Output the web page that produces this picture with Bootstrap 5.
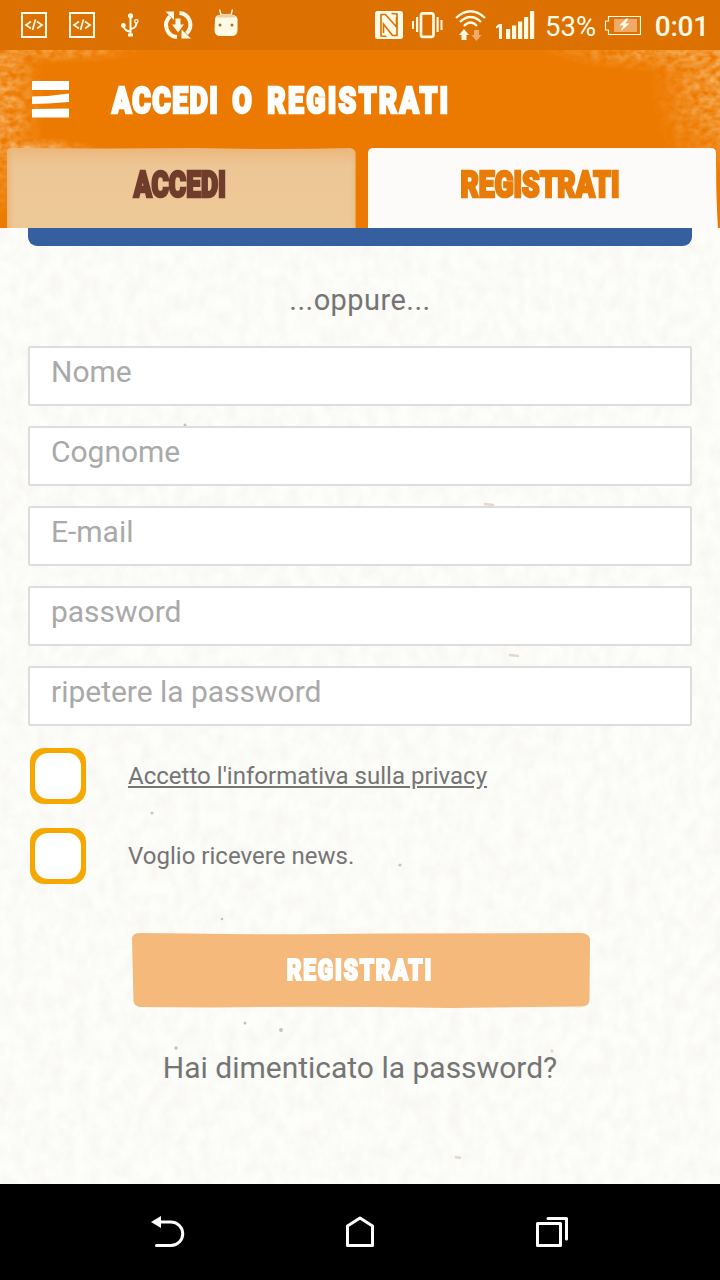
<!DOCTYPE html>
<html lang="it">
<head>
<meta charset="utf-8">
<meta name="viewport" content="width=device-width, initial-scale=1">
<title>Accedi o registrati</title>
<link href="https://cdn.jsdelivr.net/npm/bootstrap@5.3.0/dist/css/bootstrap.min.css" rel="stylesheet">
<style>
body{font-family:Roboto,"Liberation Sans",sans-serif;background:#fdfdf9;color:#757575}
.screen{width:720px;height:1280px}
.status-row{height:50px;background:#dc7000;color:#fffbe6;font-size:27.5px;line-height:50px}
.status-row svg{display:block;flex:none}
.percent{margin-left:5px;padding-top:2px}
.battery{margin-left:8px}
.clock{margin-right:11px;font-size:28px;font-weight:500;letter-spacing:-.2px;padding-top:2px}
.app-head{height:178px;background:#ed7a00}
.texture{position:absolute;inset:0;width:100%;height:100%;pointer-events:none}
.title-row{height:98px;padding-left:31px}
.display-type{display:inline-block;font-weight:900;white-space:nowrap;line-height:1;-webkit-text-stroke:2.6px currentColor;text-transform:uppercase}
.title-type{font-size:37px;letter-spacing:3px;word-spacing:5px;color:#fff;transform:scaleX(.765);transform-origin:left center;margin-left:43px;padding-top:2px}
.title-type span{letter-spacing:1.800px}
.tab-row{height:80px;padding-left:7px;gap:11px}
.tab-pill{height:80px;width:350px;padding:0 0 6px;border:0;background:none}
.tab-type{font-size:36px;transform:scaleX(.735);left:-2px}
.tab-type.wide{transform:scaleX(.78);left:-3px}
.tab-pill .shape{position:absolute;left:0;top:0}
.form-area{height:956px;padding:0 28px}
.facebook-end{height:18px;background:#355f9f;border-radius:0 0 9px 9px}
.or-line{font-size:29px;line-height:36px;margin:36px 0 28px;letter-spacing:.45px}
.form-stack{gap:20px}
.field{height:60px;border:2px solid #dedddd;border-radius:2px;font-size:30px;line-height:36px;padding:5px 21px 15px;background:#fff;box-shadow:none;letter-spacing:-.02px}
.field::placeholder{color:#a9a9a9;opacity:1}
.tick-row{height:60px;padding-left:2px}
.tick{width:56px;height:56px;border:5px solid #f6a800;border-radius:14px;background:#f6a800;flex:none;padding:0}
.tick i{display:block;width:46px;height:46px;border-radius:13px;background:#fff}
.tick-text{font-size:24px;line-height:30px;margin-left:42px;color:#757575;letter-spacing:.02px}
.send{width:458px;height:76px;border:0;background:none;padding:2px 0 0;margin:46px 0 0 2px}
.send svg{position:absolute;left:0;top:0}
.send .display-type{font-size:30px;letter-spacing:2.4px;color:#fff;transform:scaleX(.755);-webkit-text-stroke-width:2.2px;left:-1px}
.forgot{font-size:30px;line-height:36px;margin-top:42px;color:#757575;letter-spacing:0}
.keys-row{height:96px}
</style>
</head>
<body>
<div class="screen d-flex flex-column overflow-hidden position-relative">
  <div class="status-row d-flex position-relative">
    <svg width="540" height="50" viewBox="0 0 540 50" fill="#fffbe6">
      <g fill="none" stroke="#fffbe6" stroke-width="2">
        <path d="M22 13h24v24H22zM70 13h24v24H70z"/>
        <path stroke-width="1.7" d="M31 21.500l-5 3.500l5 3.500M37 21.500l5 3.500l-5 3.500M35.500 19.500l-3 10.500M79 21.500l-5 3.500l5 3.500M85 21.500l5 3.500l-5 3.500M83.500 19.500l-3 10.500"/>
        <path d="M130.500 15v20M124 27q1 4 6 4.500M131 29q5-1 5.500-6"/>
        <circle cx="136.300" cy="21.300" r="1.700" stroke-width="1.300"/>
      </g>
      <circle cx="130.500" cy="15.800" r="2.600"/><circle cx="123.300" cy="25.500" r="2.400"/><path d="M128 33.500h5v3h-5z"/>
      <g fill="none" stroke="#fffbe6" stroke-width="4"><path d="M177 37a11.800 11.800 0 0 1-7-20.500M179.500 13a11.800 11.800 0 0 1 7 20.500"/></g>
      <path d="M165.500 11.500h8.500v8.500zM191 38.500h-9.500v-9zM175.500 18.500h5v6h3.500l-6 8-6-8h3.500z"/>
      <path d="M215 19q0-5 11-5t11.500 5v11q0 6-6 6h-11q-6 0-6-6z"/>
      <path d="M216.500 16q9.500-4 19 0v1.500h-19z" fill="#f3cda2"/>
      <path d="M219.500 9.500l1.500 5M232.500 9.500l-1.500 5" stroke="#fffbe6" stroke-width="1.500"/>
      <circle cx="220" cy="25" r="1.500" fill="#b86a14"/><circle cx="232" cy="25" r="1.500" fill="#b86a14"/>
      <rect x="375" y="11" width="28" height="28" rx="2.500"/>
      <g fill="none" stroke="#dc7000" stroke-width="1.600"><path d="M386.500 36.500L381 36V14.500h4.500L396.500 27V17"/><path d="M391.500 13.500L397 14v21.500h-4.500L383.500 24v9"/></g>
      <rect x="421" y="13.300" width="12.500" height="23.500" rx="2" fill="none" stroke="#fffbe6" stroke-width="2.700"/>
      <path d="M412 21h2v8h-2zM416 17h2.200v15H416zM436.500 17h2.200v15h-2.200zM440.500 20h2v10h-2z"/>
      <g fill="none" stroke="#fffbe6" stroke-width="2.300"><path d="M456 18q14.500-13.500 29 0M460 22q10.500-10 21 0M464 26q6.500-7 13 0"/></g>
      <path d="M464 29l5 6h-2.500v5h-5v-5H459z"/><path d="M476.500 41l-5-6h2.500v-5h5v5h2.500z" fill="#eead6c"/>
      <path d="M499 24h3v15h-3v-12l-3 1.500v-2zM506 29h4.200v10H506zM512 25.500h4.200V39H512zM518 21.500h4.200V39H518zM524 17h4.200v22H524zM530 11h4.200v28H530z"/>
    </svg>
    <span class="percent">53%</span>
    <svg class="battery" width="37" height="50" viewBox="0 0 37 50" fill="none" stroke="#fffbe6"><path stroke-width="1.200" d="M4.500 16.500h32v18h-32v-4.500h-3v-9h3z"/><path d="M10 19h23v13H10z" fill="#f0aa68" stroke="none"/><path d="M22 18.500l-6.500 7h4l-3 6 9-8h-4l3-5z" fill="#fffbe6" stroke="none"/></svg>
    <span class="clock ms-auto">0:01</span>
  </div>

  <header class="app-head position-relative">
    <svg class="texture" viewBox="0 0 720 178" preserveAspectRatio="none">
      <defs>
        <filter id="brush" x="0" y="0" width="100%" height="100%"><feTurbulence type="fractalNoise" baseFrequency=".12 .17" numOctaves="2" seed="9"/><feColorMatrix values="0 0 0 0 .96  0 0 0 0 .62  0 0 0 0 .30  1.700 0 0 0 -.4"/></filter>
        <radialGradient id="fade"><stop offset="0" stop-color="#fff"/><stop offset=".5" stop-color="#fff" stop-opacity=".55"/><stop offset="1" stop-color="#fff" stop-opacity="0"/></radialGradient>
        <mask id="corners"><ellipse cx="-3" cy="50" rx="48" ry="125" fill="url(#fade)"/><ellipse cx="55" cy="-4" rx="95" ry="18" fill="url(#fade)"/><ellipse cx="725" cy="35" rx="75" ry="100" fill="url(#fade)"/><ellipse cx="660" cy="-4" rx="120" ry="26" fill="url(#fade)"/><ellipse cx="30" cy="98" rx="70" ry="11" fill="url(#fade)"/></mask>
      </defs>
      <g mask="url(#corners)" opacity=".85"><rect width="720" height="178" filter="url(#brush)"/></g>
    </svg>
    <div class="title-row d-flex align-items-center position-relative">
      <svg width="38" height="37" viewBox="0 0 38 37" fill="#fff"><path d="M1 0h37v9H1zM1 15.500l16-.5L38 12.500v8.500l-21 1.500L1 23zM1 28l37-.5V36.500H1z"/></svg>
      <h1 class="display-type title-type mb-0"><span>Accedi</span> o registrati</h1>
    </div>
    <div class="tab-row d-flex position-relative">
      <button class="tab-pill position-relative" type="button">
        <svg class="shape" width="350" height="80" viewBox="0 0 350 80"><defs><linearGradient id="sand" x2="0" y2="1"><stop stop-color="#ebb67b"/><stop offset=".22" stop-color="#edc695"/><stop offset="1" stop-color="#eec998"/></linearGradient><linearGradient id="side"><stop stop-color="#e9ad6b" stop-opacity=".7"/><stop offset=".03" stop-color="#eec998" stop-opacity="0"/><stop offset=".98" stop-color="#eec998" stop-opacity="0"/><stop offset="1" stop-color="#e9ad6b" stop-opacity=".5"/></linearGradient></defs><path d="M0 4Q0 0 5 0L100 .5 190 0Q270 2 343 0Q348 1 348.500 5V80H0z" fill="url(#sand)"/><path d="M0 4Q0 0 5 0L100 .5 190 0Q270 2 343 0Q348 1 348.500 5V80H0z" fill="url(#side)"/></svg>
        <span class="display-type tab-type position-relative" style="color:#703d2d">Accedi</span>
      </button>
      <button class="tab-pill position-relative" type="button">
        <svg class="shape" width="350" height="80" viewBox="0 0 350 80"><path d="M0 5Q0 0 6 0Q100-1.500 210-.5L343 0Q348 0 348 5Q348 50 350 80H-1z" fill="#fdfbf9"/></svg>
        <span class="display-type tab-type wide position-relative" style="color:#e97b07">Registrati</span>
      </button>
    </div>
  </header>

  <main class="form-area position-relative">
    <svg class="texture" viewBox="0 0 720 956">
      <defs><filter id="paper" x="0" y="0" width="100%" height="100%"><feTurbulence type="fractalNoise" baseFrequency=".08 .06" numOctaves="3" seed="4"/><feColorMatrix values="0 0 0 0 .76  0 0 0 0 .73  0 0 0 0 .70  .4 0 0 0 -.13"/></filter></defs>
      <rect width="720" height="956" filter="url(#paper)"/>
      <g fill="#8f8b82" opacity=".5"><circle cx="281" cy="802" r="2"/><circle cx="176" cy="820" r="1.800"/><circle cx="152" cy="585" r="1.500"/><circle cx="400" cy="637" r="1.600"/><circle cx="222" cy="691" r="1.300"/><circle cx="245" cy="795" r="1.500"/><circle cx="185" cy="197" r="1.500"/></g>
      <path d="M484 276l10 1M509 427l10 1M551 822l2 2M455 929l6 1" stroke="#d8b9a5" stroke-width="2.500" opacity=".55"/>
    </svg>
    <div class="position-relative">
      <div class="facebook-end"></div>
      <p class="or-line text-center">...oppure...</p>
      <form class="form-stack d-flex flex-column">
        <input class="form-control field" type="text" placeholder="Nome">
        <input class="form-control field" type="text" placeholder="Cognome">
        <input class="form-control field" type="email" placeholder="E-mail">
        <input class="form-control field" type="text" placeholder="password">
        <input class="form-control field" type="text" placeholder="ripetere la password">
        <div class="tick-row d-flex align-items-center"><span class="tick"><i></i></span><a class="tick-text text-decoration-underline" href="#">Accetto l'informativa sulla privacy</a></div>
        <div class="tick-row d-flex align-items-center"><span class="tick"><i></i></span><span class="tick-text">Voglio ricevere news.</span></div>
      </form>
      <div class="text-center">
        <button class="send position-relative" type="button">
          <svg width="458" height="76" viewBox="0 0 458 76"><path d="M0 6Q1 1 8 1L60 1.500Q140 3 250 1.500L450 1Q457 2 458 7L457.500 68Q457 74 450 74.500L320 76Q180 74 80 75.500L8 75Q2 74 1.500 69z" fill="#f5b97b"/></svg>
          <span class="display-type position-relative">Registrati</span>
        </button>
        <p class="forgot mb-0">Hai dimenticato la password?</p>
      </div>
    </div>
  </main>

  <nav class="keys-row bg-black">
    <svg width="720" height="96" viewBox="0 0 720 96" fill="none" stroke="#fff" stroke-width="3" stroke-linejoin="round" stroke-linecap="round"><path d="M156 38h15a11.700 11.700 0 0 1 0 23.500h-14.500"/><path d="M151 38l10-6v12z" fill="#fff" stroke="none"/><path d="M347.500 61.500V42l12.500-8 12.500 8v19.500zM537.500 39.500h23v22h-23zM548 34.500h18.500V55"/></svg>
  </nav>
</div>
<script src="https://cdn.jsdelivr.net/npm/bootstrap@5.3.0/dist/js/bootstrap.bundle.min.js"></script>
</body>
</html>
